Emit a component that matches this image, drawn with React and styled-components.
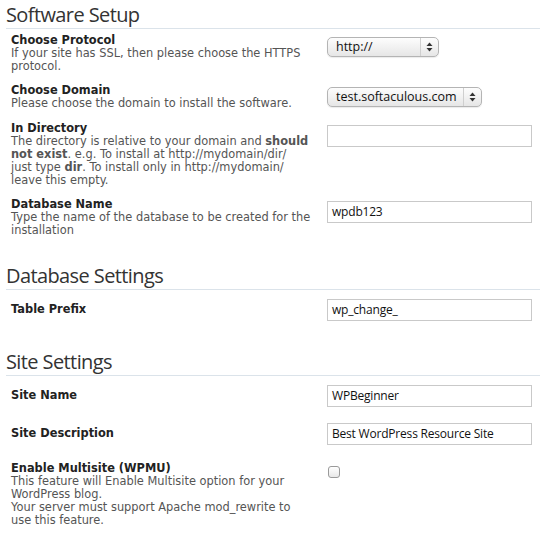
import React from 'react';
import styled, { createGlobalStyle } from 'styled-components';

const GlobalStyle = createGlobalStyle`
  body {
    margin: 0;
    background: #fff;
  }
`;

const Page = styled.div`
  padding: 0 0 0 6px;
  font-family: "DejaVu Sans", Verdana, sans-serif;
  font-size: 11.4px;
  line-height: 13px;
  color: #555;
`;

const Heading = styled.h2`
  margin: ${p => (p.first ? '0' : '18px')} 0 0;
  padding: 4px 0 0;
  height: 24px;
  font-family: "Open Sans", "DejaVu Sans", sans-serif;
  font-weight: normal;
  font-size: 20px;
  letter-spacing: -0.6px;
  line-height: 22px;
  color: #333;
  border-bottom: 1px solid #dbe3ea;
`;

const Row = styled.div`
  display: grid;
  grid-template-columns: 316px 1fr;
  align-items: ${p => (p.center ? 'center' : 'start')};
  padding: ${p => p.top || 5}px 8px 6px 5px;
  min-height: 27px;
`;

const Label = styled.div`
  white-space: nowrap;
`;

const Title = styled.div`
  font-weight: bold;
  color: #222;
`;

const Field = styled.div`
  padding-top: 3px;
  padding-bottom: ${p => (p.center ? '2px' : '0')};
`;

const TextInput = styled.div`
  box-sizing: border-box;
  width: 205px;
  height: 22px;
  border: 1px solid #c9c9c9;
  padding: 0 4px;
  font-family: "Open Sans", "DejaVu Sans", sans-serif;
  font-size: 12px;
  letter-spacing: -0.2px;
  line-height: 20px;
  color: #111;
  background: #fff;
`;

const Select = styled.div`
  box-sizing: border-box;
  display: flex;
  align-items: stretch;
  width: ${p => p.w}px;
  height: 20px;
  border: 1px solid #b4b4b4;
  border-radius: 5px;
  background: linear-gradient(#fdfdfd, #e6e6e6);
  box-shadow: 0 1px 1px rgba(0, 0, 0, 0.08);
  font-family: "Open Sans", "DejaVu Sans", sans-serif;
  font-size: 12.5px;
  line-height: 18px;
  color: #111;
`;

const SelectText = styled.span`
  flex: 1;
  padding-left: 8px;
  white-space: nowrap;
  overflow: hidden;
`;

const SelectArrows = styled.span`
  width: 17px;
  border-left: 1px solid #cfcfcf;
  display: flex;
  align-items: center;
  justify-content: center;
`;

const Checkbox = styled.span`
  display: block;
  box-sizing: border-box;
  width: 12px;
  height: 12px;
  margin: 1px 0 0 1px;
  border: 1px solid #9a9a9a;
  border-radius: 3px;
  background: linear-gradient(#fff, #e8e8e8);
`;

const Arrows = () => (
  <svg width="7" height="10" viewBox="0 0 7 10">
    <path d="M3.5 0.5 L6.5 4 L0.5 4 Z" fill="#333" />
    <path d="M3.5 9.5 L6.5 6 L0.5 6 Z" fill="#333" />
  </svg>
);

const Dropdown = ({ value, width }) => (
  <Select w={width}>
    <SelectText>{value}</SelectText>
    <SelectArrows>
      <Arrows />
    </SelectArrows>
  </Select>
);

const App = () => (
  <Page>
    <GlobalStyle />
    <Heading first>Software Setup</Heading>
    <Row>
      <Label>
        <Title>Choose Protocol</Title>
        If your site has SSL, then please choose the HTTPS
        <br />
        protocol.
      </Label>
      <Field>
        <Dropdown value="http://" width={112} />
      </Field>
    </Row>
    <Row>
      <Label>
        <Title>Choose Domain</Title>
        Please choose the domain to install the software.
      </Label>
      <Field>
        <Dropdown value="test.softaculous.com" width={155} />
      </Field>
    </Row>
    <Row>
      <Label>
        <Title>In Directory</Title>
        The directory is relative to your domain and <b>should</b>
        <br />
        <b>not exist</b>. e.g. To install at http://mydomain/dir/
        <br />
        just type <b>dir</b>. To install only in http://mydomain/
        <br />
        leave this empty.
      </Label>
      <Field>
        <TextInput />
      </Field>
    </Row>
    <Row>
      <Label>
        <Title>Database Name</Title>
        Type the name of the database to be created for the
        <br />
        installation
      </Label>
      <Field>
        <TextInput>wpdb123</TextInput>
      </Field>
    </Row>

    <Heading>Database Settings</Heading>
    <Row center top={6}>
      <Label>
        <Title>Table Prefix</Title>
      </Label>
      <Field center>
        <TextInput>wp_change_</TextInput>
      </Field>
    </Row>

    <Heading>Site Settings</Heading>
    <Row center top={6}>
      <Label>
        <Title>Site Name</Title>
      </Label>
      <Field center>
        <TextInput>WPBeginner</TextInput>
      </Field>
    </Row>
    <Row center top={5}>
      <Label>
        <Title>Site Description</Title>
      </Label>
      <Field center>
        <TextInput>Best WordPress Resource Site</TextInput>
      </Field>
    </Row>
    <Row top={9}>
      <Label>
        <Title>Enable Multisite (WPMU)</Title>
        This feature will Enable Multisite option for your
        <br />
        WordPress blog.
        <br />
        Your server must support Apache mod_rewrite to
        <br />
        use this feature.
      </Label>
      <Field>
        <Checkbox />
      </Field>
    </Row>
  </Page>
);

export default App;
